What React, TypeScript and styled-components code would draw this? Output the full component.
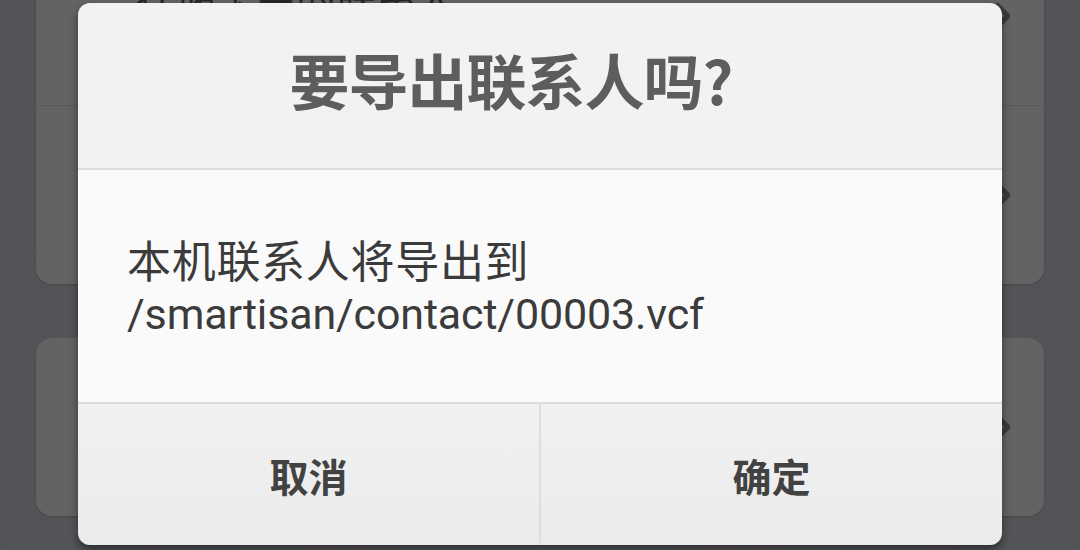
import styled, { createGlobalStyle } from "styled-components";

const GlobalStyle = createGlobalStyle`
  html, body {
    margin: 0;
    padding: 0;
    background: #565758;
    overflow: hidden;
  }
  * {
    box-sizing: border-box;
  }
`;

const Page = styled.div`
  position: relative;
  width: 1080px;
  height: 550px;
  overflow: hidden;
  padding: 0 36px;
  background: linear-gradient(90deg, #525356 0%, #58595a 40%, #58595a 60%, #525356 100%);
  font-family: Roboto, "Noto Sans CJK SC", sans-serif;
`;

const List = styled.div`
  display: flex;
  flex-direction: column;
  gap: 54px;
  margin-top: -73px;
`;

const Card = styled.div`
  background: #636363;
  border-radius: 16px;
  box-shadow: 0 1px 2px rgba(0, 0, 0, 0.15);
  overflow: hidden;
`;

const Row = styled.div<{ $divider?: boolean }>`
  height: ${(p) => (p.$divider ? 179 : 178)}px;
  display: flex;
  align-items: center;
  justify-content: space-between;
  padding: 0 34px 0 100px;
  border-top: ${(p) => (p.$divider ? "1px solid #595959" : "none")};
`;

const RowText = styled.div`
  font-size: 40px;
  color: #262626;
  align-self: flex-start;
  padding-top: 40px;
  font-family: "Noto Sans CJK SC", sans-serif;
`;

const Chevron = () => (
  <svg width="16" height="28" viewBox="0 0 16 28">
    <path d="M2 2 L14 14 L2 26" fill="none" stroke="#3a3a3b" strokeWidth="5" strokeLinejoin="miter" />
  </svg>
);

const Dialog = styled.div`
  position: absolute;
  left: 78px;
  top: 3px;
  width: 924px;
  height: 542px;
  border-radius: 12px;
  overflow: hidden;
  display: flex;
  flex-direction: column;
  box-shadow: 0 5px 8px rgba(0, 0, 0, 0.45);
`;

const Header = styled.div`
  height: 167px;
  flex-shrink: 0;
  background: #f2f2f2;
  border-bottom: 2px solid #dcdcdc;
  display: flex;
  align-items: center;
  justify-content: center;
  padding: 0 58px 14px 0;
`;

const Title = styled.div`
  font-family: "Noto Sans CJK SC", sans-serif;
  font-size: 60px;
  font-weight: 700;
  color: #5d5d5d;
  letter-spacing: -1px;
`;

const Body = styled.div`
  height: 234px;
  flex-shrink: 0;
  background: #fafafa;
  border-bottom: 2px solid #dcdcdc;
  display: flex;
  flex-direction: column;
  justify-content: center;
  padding: 6px 0 0 49px;
  font-size: 44px;
  line-height: 51px;
  color: #3b3b3b;
`;

const Line = styled.div<{ $latin?: boolean }>`
  white-space: nowrap;
  font-size: ${(p) => (p.$latin ? 43 : 44)}px;
  letter-spacing: ${(p) => (p.$latin ? "-0.15px" : "0.7px")};
`;

const Footer = styled.div`
  flex: 1;
  display: grid;
  grid-template-columns: 1fr 2px 1fr;
  background: linear-gradient(180deg, #f1f1f1 0%, #ebebeb 100%);
`;

const Button = styled.div`
  display: flex;
  align-items: center;
  justify-content: center;
  font-family: "Noto Sans CJK SC", sans-serif;
  font-size: 39px;
  font-weight: 700;
  color: #424242;
`;

const Divider = styled.div`
  background: #dedede;
`;

export default function App() {
  return (
    <>
      <GlobalStyle />
      <Page>
        <List>
          <Card>
            <Row>
              <RowText>存储卡中的联系人</RowText>
              <Chevron />
            </Row>
            <Row $divider>
              <RowText>导出联系人</RowText>
              <Chevron />
            </Row>
          </Card>
          <Card>
            <Row>
              <RowText>分享联系人</RowText>
              <Chevron />
            </Row>
          </Card>
        </List>
        <Dialog>
          <Header>
            <Title>要导出联系人吗?</Title>
          </Header>
          <Body>
            <Line>本机联系人将导出到</Line>
            <Line $latin>/smartisan/contact/00003.vcf</Line>
          </Body>
          <Footer>
            <Button>取消</Button>
            <Divider />
            <Button>确定</Button>
          </Footer>
        </Dialog>
      </Page>
    </>
  );
}
